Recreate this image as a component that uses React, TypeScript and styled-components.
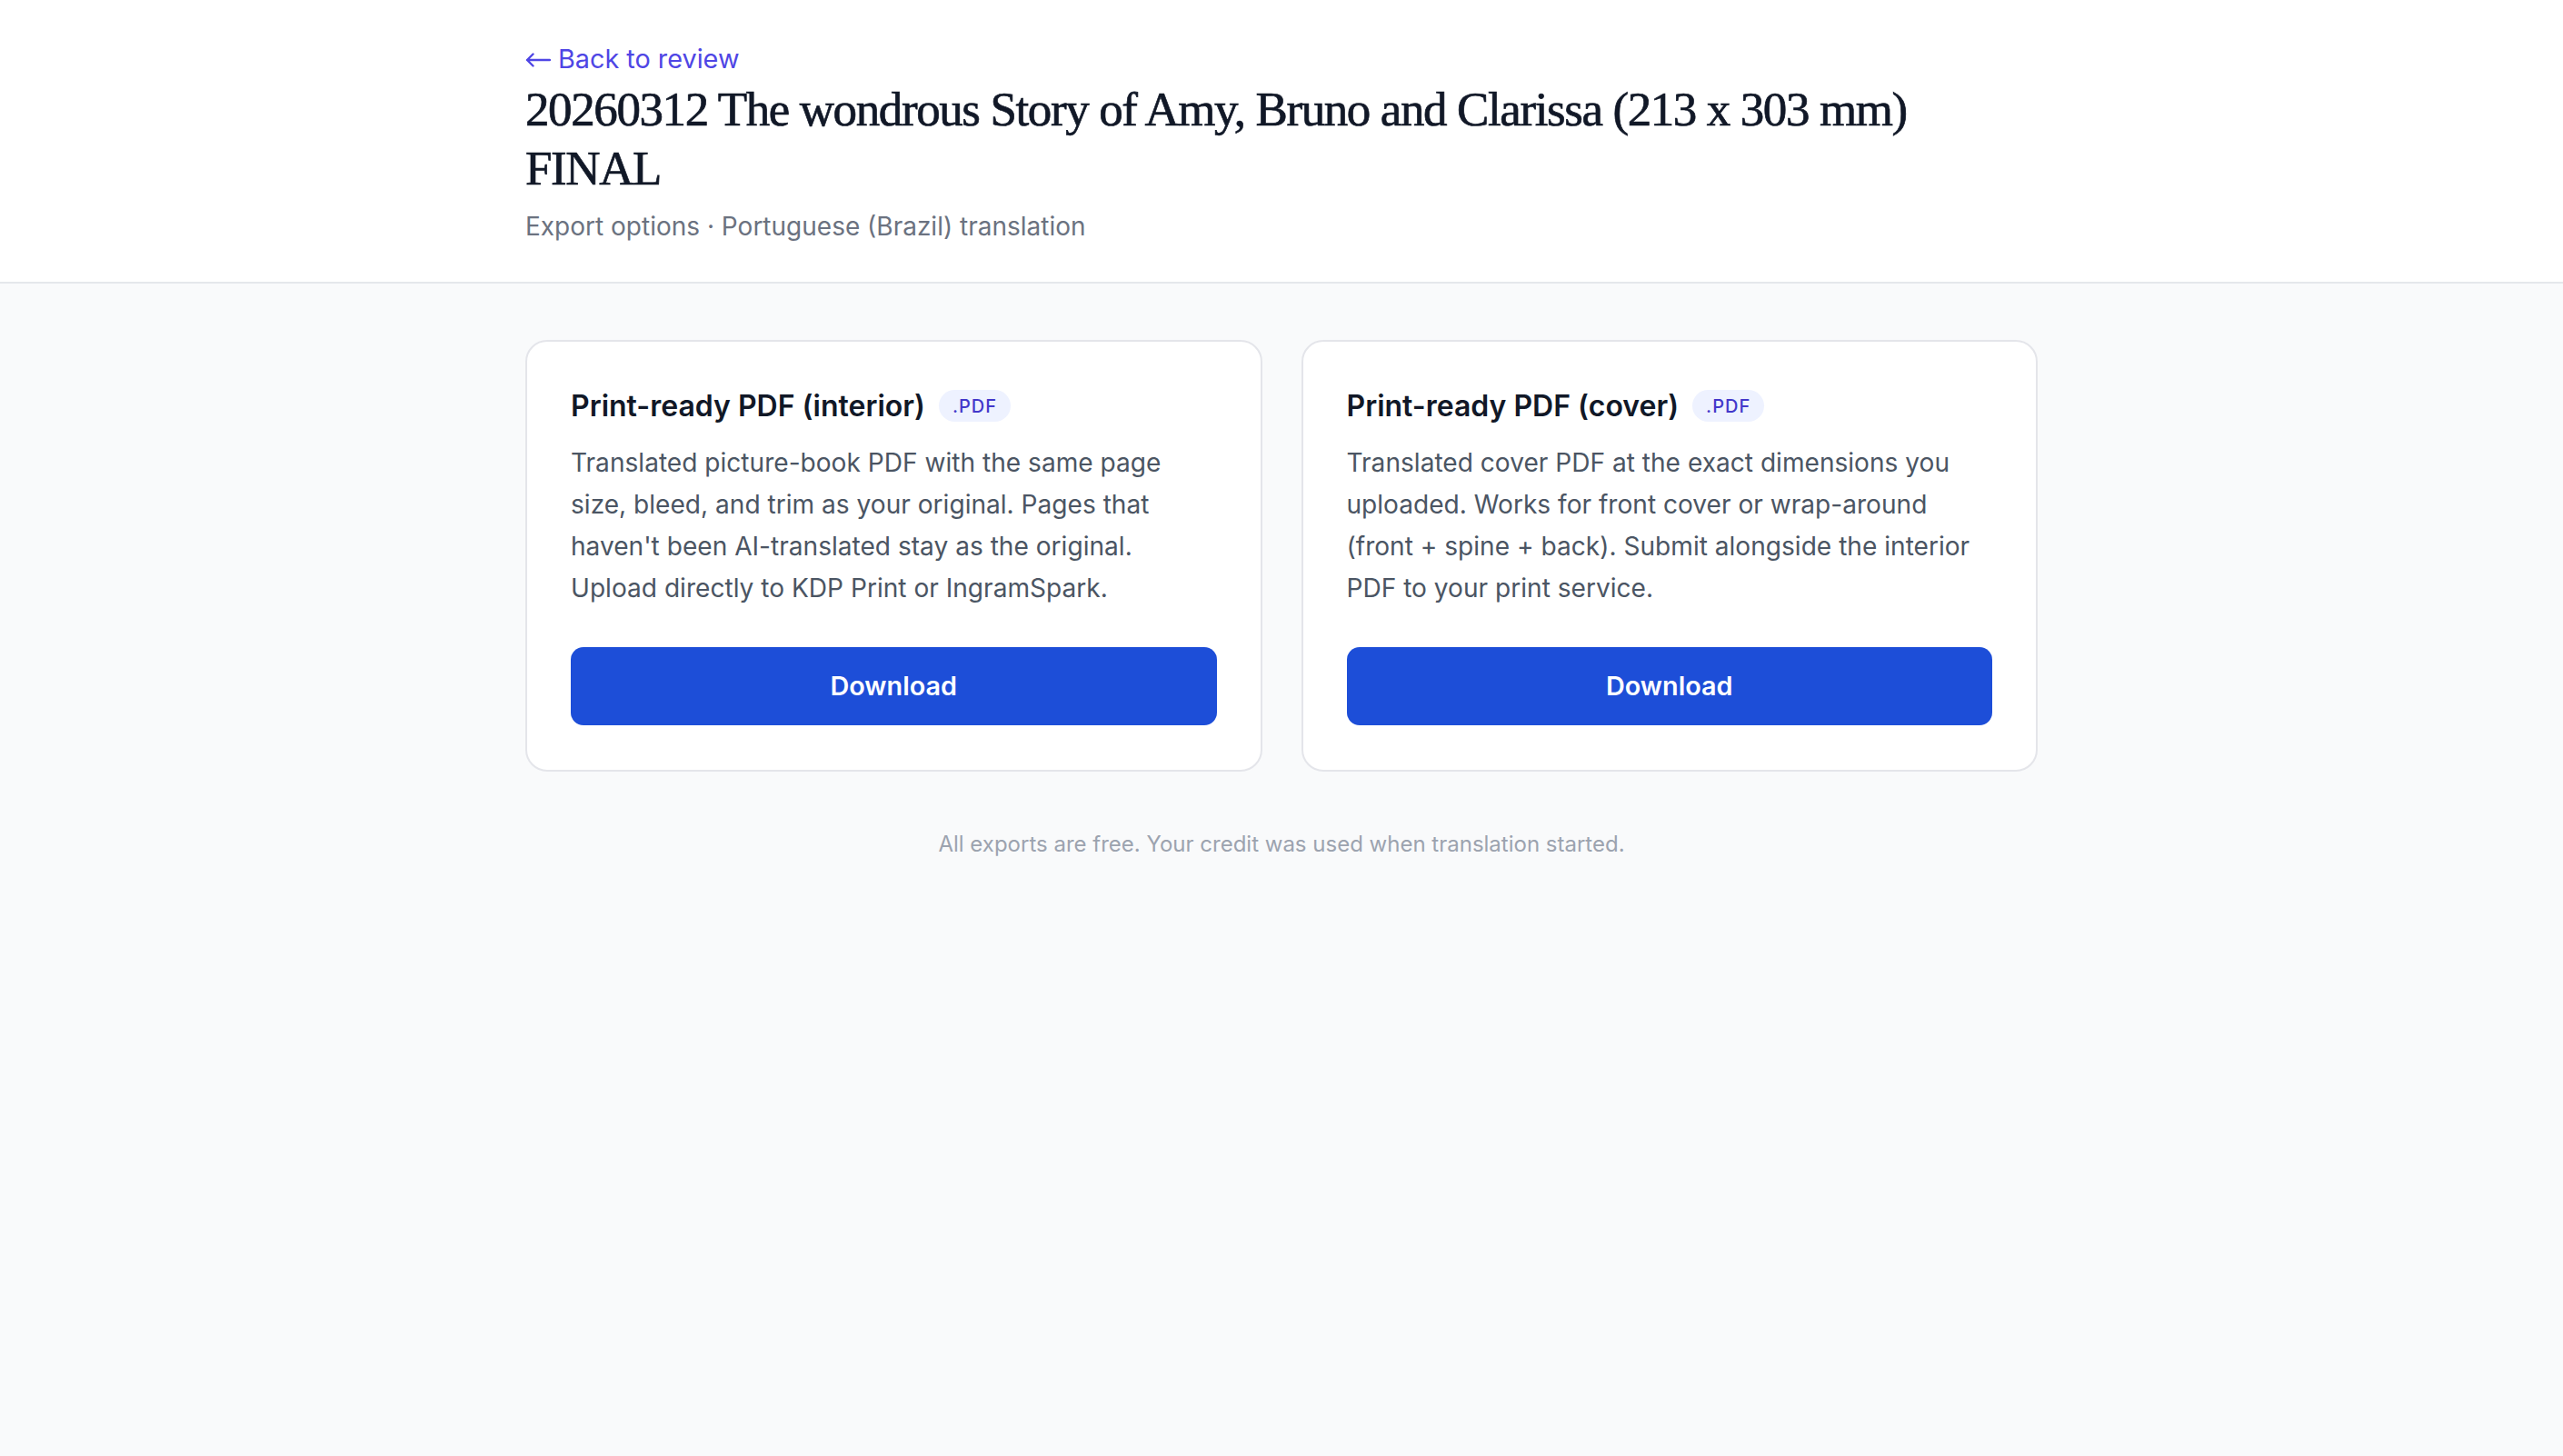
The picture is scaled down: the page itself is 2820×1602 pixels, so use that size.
import React from "react";
import styled, { createGlobalStyle } from "styled-components";

const GlobalStyle = createGlobalStyle`
  html, body {
    margin: 0;
    padding: 0;
    background-color: #f9fafb;
  }
  body {
    font-family: Inter, "Noto Sans", sans-serif;
    color: #111827;
    min-height: 100vh;
  }
  * {
    box-sizing: border-box;
  }
`;

const Page = styled.div`
  min-height: 100vh;
  background-color: #f9fafb;
`;

const Header = styled.header`
  background-color: #ffffff;
  border-bottom: 2px solid #e5e7eb;
  padding: 43px 0 39px;
`;

const Container = styled.div`
  width: 1664px;
  margin: 0 auto;
`;

const BackLink = styled.a`
  display: inline-flex;
  align-items: center;
  gap: 8px;
  height: 43px;
  font-size: 28.8px;
  line-height: 43px;
  color: #4f46e5;
  text-decoration: none;
  cursor: pointer;
`;

const ArrowIcon = styled.svg`
  width: 28px;
  height: 16px;
  margin-top: 3px;
`;

const Title = styled.h1`
  margin: 2px 0 0;
  font-family: "Liberation Serif", "DejaVu Serif", serif;
  font-weight: 400;
  font-size: 53px;
  line-height: 64.8px;
  color: #111827;
  letter-spacing: -1.4px;
  -webkit-text-stroke: 0.7px #111827;
`;

const Subtitle = styled.p`
  margin: 10px 0 0;
  font-size: 28px;
  line-height: 43px;
  color: #6b7280;
`;

const Main = styled.main`
  padding: 62px 0 80px;
`;

const CardGrid = styled.div`
  display: grid;
  grid-template-columns: 1fr 1fr;
  gap: 43px;
`;

const Card = styled.section`
  background-color: #ffffff;
  border: 2px solid #e4e5ea;
  border-radius: 24px;
  padding: 46px 48px 49px;
  display: flex;
  flex-direction: column;
`;

const CardHead = styled.div`
  display: flex;
  align-items: center;
  gap: 15px;
`;

const CardTitle = styled.h2`
  margin: 0;
  font-size: 32px;
  line-height: 50.4px;
  font-weight: 600;
  color: #111827;
`;

const Badge = styled.span`
  display: inline-flex;
  align-items: center;
  height: 35px;
  padding: 0 15px;
  border-radius: 999px;
  background-color: #eef2ff;
  color: #4338ca;
  font-size: 20px;
  font-weight: 500;
  letter-spacing: 1px;
`;

const Description = styled.p`
  margin: 15px 0 0;
  font-size: 28.1px;
  line-height: 45.9px;
  color: #4b5563;
`;

const DownloadButton = styled.button`
  margin-top: 41px;
  height: 86px;
  width: 100%;
  border: none;
  border-radius: 14px;
  background-color: #1d4ed8;
  color: #ffffff;
  font-family: Inter, "Noto Sans", sans-serif;
  font-size: 28.8px;
  font-weight: 600;
  cursor: pointer;
`;

const Footnote = styled.p`
  margin: 62px 0 0;
  text-align: center;
  font-size: 24px;
  line-height: 36px;
  color: #9ca3af;
`;

interface exportOption {
  title: string;
  ext: string;
  text: string;
}

const options: Array<exportOption> = [
  {
    title: "Print-ready PDF (interior)",
    ext: ".PDF",
    text: "Translated picture-book PDF with the same page size, bleed, and trim as your original. Pages that haven't been AI-translated stay as the original. Upload directly to KDP Print or IngramSpark.",
  },
  {
    title: "Print-ready PDF (cover)",
    ext: ".PDF",
    text: "Translated cover PDF at the exact dimensions you uploaded. Works for front cover or wrap-around (front + spine + back). Submit alongside the interior PDF to your print service.",
  },
];

const App = () => {
  return (
    <Page>
      <GlobalStyle />
      <Header>
        <Container>
          <BackLink>
            <ArrowIcon viewBox="0 0 28 16" fill="none">
              <path
                d="M27 8H2M8.5 1.5L2 8l6.5 6.5"
                stroke="currentColor"
                strokeWidth="2.4"
                strokeLinecap="round"
                strokeLinejoin="round"
              />
            </ArrowIcon>
            Back to review
          </BackLink>
          <Title>
            20260312 The wondrous Story of Amy, Bruno and Clarissa (213 x 303 mm) FINAL
          </Title>
          <Subtitle>Export options · Portuguese (Brazil) translation</Subtitle>
        </Container>
      </Header>
      <Main>
        <Container>
          <CardGrid>
            {options.map((opt) => {
              return (
                <Card key={opt.title}>
                  <CardHead>
                    <CardTitle>{opt.title}</CardTitle>
                    <Badge>{opt.ext}</Badge>
                  </CardHead>
                  <Description>{opt.text}</Description>
                  <DownloadButton>Download</DownloadButton>
                </Card>
              );
            })}
          </CardGrid>
          <Footnote>
            All exports are free. Your credit was used when translation started.
          </Footnote>
        </Container>
      </Main>
    </Page>
  );
};

export default App;
